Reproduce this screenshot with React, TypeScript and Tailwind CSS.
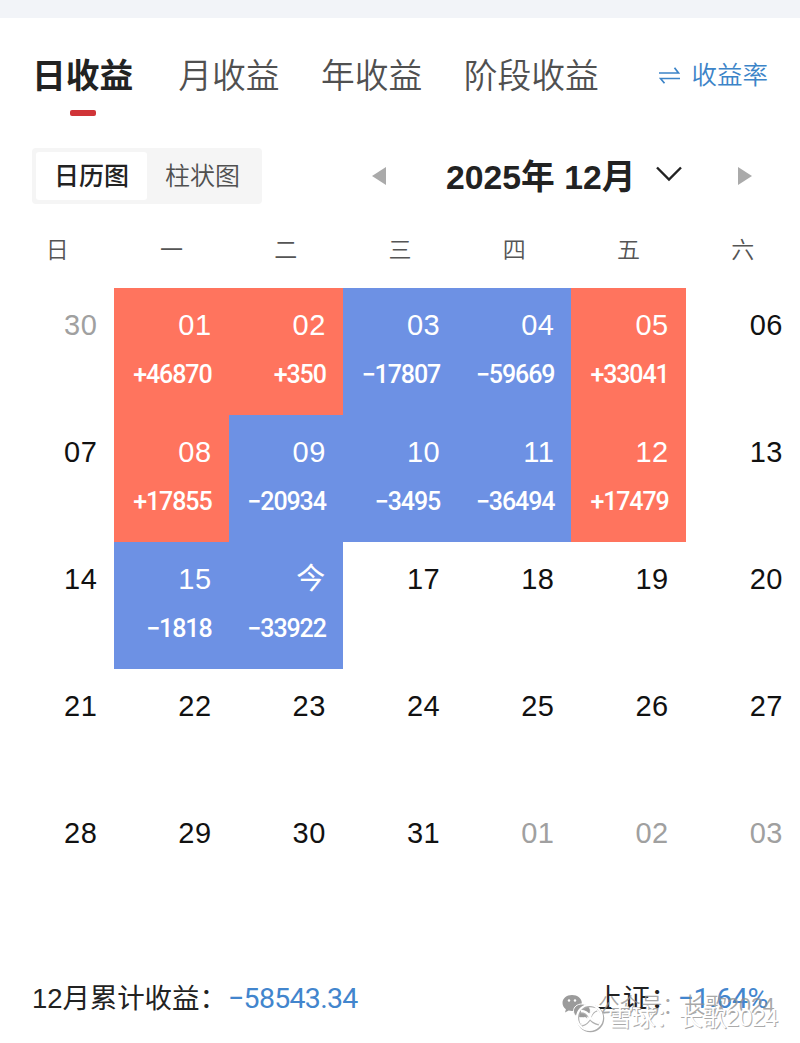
import clsx from 'clsx';

type Day = {
  label: string;
  amount?: number;
  muted?: boolean;
};

const tabs = ['日收益', '月收益', '年收益', '阶段收益'];
const weekdays = ['日', '一', '二', '三', '四', '五', '六'];

const days: Day[] = [
  { label: '30', muted: true },
  { label: '01', amount: 46870 },
  { label: '02', amount: 350 },
  { label: '03', amount: -17807 },
  { label: '04', amount: -59669 },
  { label: '05', amount: 33041 },
  { label: '06' },
  { label: '07' },
  { label: '08', amount: 17855 },
  { label: '09', amount: -20934 },
  { label: '10', amount: -3495 },
  { label: '11', amount: -36494 },
  { label: '12', amount: 17479 },
  { label: '13' },
  { label: '14' },
  { label: '15', amount: -1818 },
  { label: '今', amount: -33922 },
  { label: '17' },
  { label: '18' },
  { label: '19' },
  { label: '20' },
  { label: '21' },
  { label: '22' },
  { label: '23' },
  { label: '24' },
  { label: '25' },
  { label: '26' },
  { label: '27' },
  { label: '28' },
  { label: '29' },
  { label: '30' },
  { label: '31' },
  { label: '01', muted: true },
  { label: '02', muted: true },
  { label: '03', muted: true }
];

const formatAmount = (value: number) => (value > 0 ? `+${value}` : `−${Math.abs(value)}`);

function DayCell({ day }: { day: Day }) {
  const hasAmount = day.amount !== undefined;

  return (
    <div
      className={clsx(
        'flex flex-col items-end pr-[17px] pt-[19px]',
        hasAmount && (day.amount! > 0 ? 'bg-[#ff745e]' : 'bg-[#6d91e4]'),
        hasAmount ? 'text-white' : day.muted ? 'text-[#a0a0a0]' : 'text-[#111]'
      )}
    >
      <span className="text-[29px] leading-9 tracking-[0.5px]">{day.label}</span>
      {hasAmount && (
        <span className="mt-[16px] font-[Roboto] text-[25px] font-medium leading-8 tracking-[-1.1px]">
          {formatAmount(day.amount!)}
        </span>
      )}
    </div>
  );
}

function Watermark() {
  return (
    <div className="pointer-events-none absolute left-[562px] top-[990px] h-[50px] w-[230px]">
      <svg className="absolute left-0 top-[4px]" width="30" height="26" viewBox="0 0 30 26" fill="#9b9b9b">
        <path d="M10 1C4.500 1 .5 4.500.5 9c0 2.600 1.300 4.700 3.400 6.200L3 18.500l3.700-1.900c1 .3 2 .4 3.300.4 5.500 0 9.800-3.500 9.800-8S15.500 1 10 1z" />
        <path d="M20 10c-4.800 0-8.500 3-8.500 6.900s3.700 6.900 8.500 6.900c1 0 1.900-.1 2.800-.4l3.100 1.600-.8-2.700c2-1.300 3.300-3.200 3.300-5.400 0-3.900-3.600-6.900-8.400-6.900z" stroke="#fff" />
        <g fill="#fff">
          <circle cx="7" cy="6.500" r="1.200" />
          <circle cx="13" cy="6.500" r="1.200" />
        </g>
      </svg>
      <span className="absolute left-[36px] top-[2px] whitespace-nowrap text-[21.500px] font-[350] leading-7 text-[#909090]/80">
        公众号：长歌2024
      </span>
      <svg className="absolute left-[13px] top-[13px]" width="30" height="30" viewBox="0 0 30 30" fill="none">
        <circle cx="15.500" cy="15.500" r="12.500" stroke="#aaa" strokeWidth="2.500" />
        <circle cx="14.500" cy="14.500" r="12.500" stroke="#fff" strokeWidth="2.200" />
        <path d="M6 9c4 0 7 2 9 6-2 4-4 6-8 7M22 7c-4 1-6 4-7 8 2 4 5 5 9 6" stroke="#b0b0b0" strokeWidth="3" />
        <path d="M6 8c4 0 7 2 9 6-2 4-4 6-8 7M22 6c-4 1-6 4-7 8 2 4 5 5 9 6" stroke="#fff" strokeWidth="2.500" />
      </svg>
      <span className="absolute left-[46px] top-[12px] whitespace-nowrap text-[24px] leading-8 tracking-[-0.4px] text-white [text-shadow:1px_1px_0_#aaa]">
        雪球：长歌2024
      </span>
    </div>
  );
}

export default function App() {
  return (
    <div className="relative flex h-[1043px] w-[800px] flex-col overflow-hidden bg-white font-['Liberation_Sans','Noto_Sans_CJK_SC',sans-serif] text-[#222]">
      <div className="h-[18px] shrink-0 bg-[#f2f4f8]" />

      {/* Period tabs */}
      <div className="flex h-[108px] items-start pl-8 pr-8 pt-8">
        <div className="flex">
          {tabs.map((tab, i) => (
            <div
              key={tab}
              className={clsx(
                'flex flex-col items-center text-[33.750px] leading-[52px]',
                i === 0 ? 'mr-[45px] font-bold text-[#222]' : 'mr-[41.500px] font-[350] text-[#505050]'
              )}
            >
              {tab}
              {i === 0 && <span className="mt-[8px] h-[6px] w-[26px] rounded-[2px] bg-[#d03438]" />}
            </div>
          ))}
        </div>
        <div className="ml-auto flex h-[50px] items-center gap-[11px] whitespace-nowrap text-[25.500px] font-[350] text-[#3c84c8]">
          <svg width="21" height="17" viewBox="0 0 21 17" fill="none" stroke="currentColor" strokeWidth="1.700">
            <path d="M0 6H19.500L15.500 .8M21 11.500H1.500L5.500 16.200" />
          </svg>
          收益率
        </div>
      </div>

      {/* View switch and month picker */}
      <div className="flex h-[100px] items-start pl-8 pt-[22px]">
        <div className="flex h-[56px] w-[230px] rounded-[4px] bg-[#f5f5f5] p-1 text-[25px] leading-[48px]">
          <div className="w-[111px] rounded-[3px] bg-white text-center font-medium">日历图</div>
          <div className="flex-1 text-center font-[350] text-[#505050]">柱状图</div>
        </div>
        <div className="ml-[110px] flex h-[56px] items-center">
          <svg width="14" height="18" viewBox="0 0 15 18" preserveAspectRatio="none" fill="#aaa">
            <path d="M15 0V18L0 9z" />
          </svg>
          <span className="ml-[60px] whitespace-nowrap pt-[2px] text-[33.750px] font-bold leading-[50px]">2025年 12月</span>
          <svg className="ml-[20px] -mt-1" width="26" height="16" viewBox="0 0 26 16" fill="none" stroke="#222" strokeWidth="2.400">
            <path d="M1 1.500L13 13.500L25 1.500" />
          </svg>
          <svg className="ml-[56px]" width="14" height="18" viewBox="0 0 15 18" preserveAspectRatio="none" fill="#aaa">
            <path d="M0 0V18L15 9z" />
          </svg>
        </div>
      </div>

      {/* Calendar */}
      <div className="grid h-[61.500px] w-[800px] grid-cols-7">
        {weekdays.map((day) => (
          <div key={day} className="pt-[6px] text-center text-[23px] font-[350] leading-9 text-[#555]">
            {day}
          </div>
        ))}
      </div>
      <div className="grid h-[636px] w-[800px] shrink-0 grid-cols-7 grid-rows-5">
        {days.map((day, i) => (
          <DayCell key={i} day={day} />
        ))}
      </div>

      {/* Totals */}
      <div className="flex items-center pl-8 pr-8 pt-[55px] leading-10">
        <span className="w-[196px] whitespace-nowrap text-[27.500px] tracking-[-0.1px]">12月累计收益：</span>
        <span className="font-[Roboto] text-[28.500px] tracking-[-0.7px] text-[#4285cd]">−58543.34</span>
        <span className="ml-auto text-[27.500px]">上证：</span>
        <span className="font-[Roboto] text-[28.500px] tracking-[-0.4px] text-[#4285cd]">−1.64%</span>
      </div>
      <Watermark />
    </div>
  );
}
